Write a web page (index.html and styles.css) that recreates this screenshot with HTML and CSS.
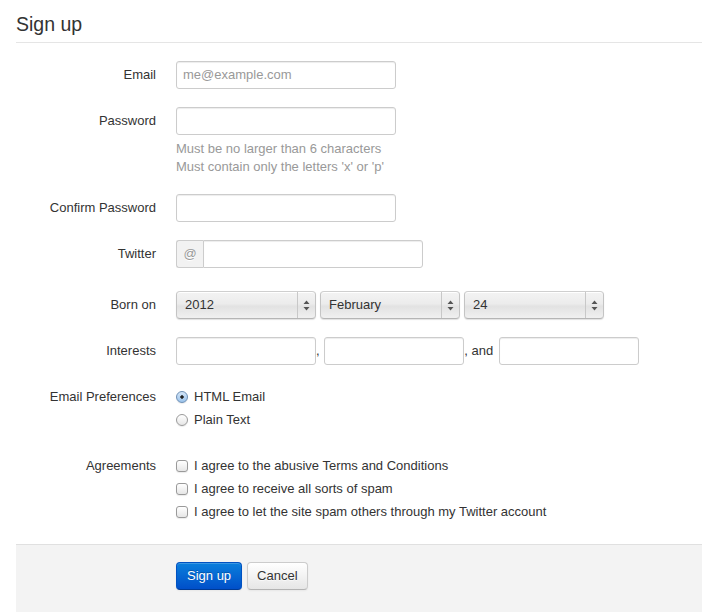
FILE: index.html
```html
<!DOCTYPE html>
<html>
<head>
<meta charset="utf-8">
<title>Sign up</title>
<link rel="stylesheet" href="styles.css">
</head>
<body>
<div class="page">
  <form class="form-horizontal">
    <div class="legend">Sign up</div>

    <div class="control-group">
      <label class="control-label">Email</label>
      <div class="controls">
        <input class="text-input" type="text" placeholder="me@example.com">
      </div>
    </div>

    <div class="control-group">
      <label class="control-label">Password</label>
      <div class="controls">
        <input class="text-input" type="password">
        <p class="help-block">Must be no larger than 6 characters<br>Must contain only the letters 'x' or 'p'</p>
      </div>
    </div>

    <div class="control-group">
      <label class="control-label">Confirm Password</label>
      <div class="controls">
        <input class="text-input" type="password">
      </div>
    </div>

    <div class="control-group">
      <label class="control-label">Twitter</label>
      <div class="controls">
        <div class="input-prepend">
          <span class="add-on">@</span>
          <input class="text-input prepended" type="text">
        </div>
      </div>
    </div>

    <div class="control-group">
      <label class="control-label">Born on</label>
      <div class="controls select-row">
        <div class="select"><span class="select-value">2012</span><span class="select-arrows"><svg width="7" height="11" viewBox="0 0 7 11"><path d="M3.5 0.5 L6.5 4 H0.5 Z M3.5 10.5 L6.5 7 H0.5 Z" fill="#555"/></svg></span></div>
        <div class="select"><span class="select-value">February</span><span class="select-arrows"><svg width="7" height="11" viewBox="0 0 7 11"><path d="M3.5 0.5 L6.5 4 H0.5 Z M3.5 10.5 L6.5 7 H0.5 Z" fill="#555"/></svg></span></div>
        <div class="select select-narrow"><span class="select-value">24</span><span class="select-arrows"><svg width="7" height="11" viewBox="0 0 7 11"><path d="M3.5 0.5 L6.5 4 H0.5 Z M3.5 10.5 L6.5 7 H0.5 Z" fill="#555"/></svg></span></div>
      </div>
    </div>

    <div class="control-group">
      <label class="control-label">Interests</label>
      <div class="controls interests">
        <input class="text-input small" type="text"><span class="sep sep-comma">, </span><input class="text-input small" type="text"><span class="sep sep-and">, and </span><input class="text-input small" type="text">
      </div>
    </div>

    <div class="control-group">
      <label class="control-label">Email Preferences</label>
      <div class="controls choice-list">
        <label class="choice"><input class="radio" type="radio" name="pref" checked><span>HTML Email</span></label>
        <label class="choice"><input class="radio" type="radio" name="pref"><span>Plain Text</span></label>
      </div>
    </div>

    <div class="control-group">
      <label class="control-label">Agreements</label>
      <div class="controls choice-list">
        <label class="choice"><input class="checkbox" type="checkbox"><span>I agree to the abusive Terms and Conditions</span></label>
        <label class="choice"><input class="checkbox" type="checkbox"><span>I agree to receive all sorts of spam</span></label>
        <label class="choice"><input class="checkbox" type="checkbox"><span>I agree to let the site spam others through my Twitter account</span></label>
      </div>
    </div>

    <div class="form-actions">
      <button type="button" class="btn btn-primary">Sign up</button>
      <button type="button" class="btn btn-cancel">Cancel</button>
    </div>
  </form>
</div>
</body>
</html>
```

FILE: styles.css
```css
* {
  box-sizing: content-box;
}

html, body {
  margin: 0;
  padding: 0;
  background: #ffffff;
}

body {
  font-family: "Liberation Sans", Arial, Helvetica, sans-serif;
  font-size: 13px;
  line-height: 18px;
  color: #333333;
}

.page {
  padding: 6px 0 0 16px;
  width: 686px;
}

.legend {
  font-size: 19.5px;
  line-height: 36px;
  color: #333333;
  border-bottom: 1px solid #e5e5e5;
  margin-bottom: 18px;
}

.control-group {
  display: flex;
  align-items: flex-start;
  margin-bottom: 18px;
}

.control-label {
  width: 140px;
  flex-shrink: 0;
  padding-top: 5px;
  text-align: right;
  line-height: 18px;
}

.controls {
  margin-left: 20px;
}

.text-input {
  display: block;
  width: 206px;
  height: 18px;
  padding: 4px 6px;
  margin: 0;
  border: 1px solid #cccccc;
  border-radius: 3px;
  box-shadow: inset 0 1px 1px rgba(0, 0, 0, 0.075);
  font-family: inherit;
  font-size: 13px;
  line-height: 18px;
  color: #555555;
  background: #ffffff;
  outline: none;
}

.text-input::placeholder {
  color: #999999;
}

.help-block {
  margin: 5px 0 0;
  color: #999999;
  line-height: 18px;
}

.input-prepend {
  display: flex;
  margin-bottom: 5px;
}

.add-on {
  display: block;
  min-width: 16px;
  height: 18px;
  padding: 4px 5px;
  line-height: 18px;
  text-align: center;
  color: #999999;
  text-shadow: 0 1px 0 #ffffff;
  background: #f2f2f2;
  border: 1px solid #cccccc;
  border-right: 0;
  border-radius: 3px 0 0 3px;
}

.text-input.prepended {
  border-radius: 0 3px 3px 0;
}

.select-row {
  display: flex;
  gap: 4px;
}

.select {
  display: flex;
  width: 138px;
  height: 26px;
  border: 1px solid #c4c4c4;
  border-top-color: #cfcfcf;
  border-bottom-color: #b5b5b5;
  border-radius: 4px;
  background: linear-gradient(#f3f3f3 0%, #ececec 45%, #e2e2e2 55%, #f0f0f0 100%);
  box-shadow: inset 0 1px 0 #ffffff, 0 1px 1px rgba(0, 0, 0, 0.12);
}

.select-value {
  flex: 1;
  padding-left: 8px;
  line-height: 26px;
  color: #333333;
}

.select-arrows {
  width: 17px;
  border-left: 1px solid #c8c8c8;
  display: flex;
  align-items: center;
  justify-content: center;
}

.interests {
  display: flex;
  align-items: center;
}

.text-input.small {
  width: 126px;
}

.sep {
  white-space: pre;
}

.sep-comma {
  margin-right: 1px;
}

.sep-and {
  margin-right: 2px;
}

.choice-list {
  padding-top: 5px;
}

.choice {
  display: flex;
  align-items: center;
  line-height: 18px;
  margin-bottom: 5px;
}

.radio,
.checkbox {
  -webkit-appearance: none;
  appearance: none;
  margin: 0 6px 0 0;
  width: 10px;
  height: 10px;
  border: 1px solid #9a9a9a;
  background: linear-gradient(#ffffff, #e6e6e6);
  box-shadow: 0 1px 1px rgba(0, 0, 0, 0.08);
  flex-shrink: 0;
}

.radio {
  border-radius: 50%;
}

.radio:checked {
  background: radial-gradient(circle, #222222 0, #222222 1.4px, transparent 2px), linear-gradient(#d5e6f7, #9cc4ec);
  border-color: #6d8fb5;
}

.checkbox {
  border-radius: 3px;
}

.form-actions {
  margin-top: 18px;
  padding: 17px 20px 40px 160px;
  background: #f3f3f3;
  border-top: 1px solid #e0e0e0;
  display: flex;
  gap: 5px;
}

.btn {
  display: inline-block;
  margin: 0;
  padding: 4px 10px;
  font-family: inherit;
  font-size: 13px;
  line-height: 18px;
  color: #333333;
  text-shadow: 0 1px 1px rgba(255, 255, 255, 0.75);
  background: linear-gradient(#ffffff, #e6e6e6);
  border: 1px solid #cccccc;
  border-bottom-color: #b3b3b3;
  border-radius: 4px;
  box-shadow: inset 0 1px 0 rgba(255, 255, 255, 0.2), 0 1px 2px rgba(0, 0, 0, 0.05);
  cursor: pointer;
}

.btn-cancel {
  padding: 4px 9px;
}

.btn-primary {
  color: #ffffff;
  text-shadow: 0 -1px 0 rgba(0, 0, 0, 0.25);
  background: linear-gradient(#0a7fdc, #004fc9);
  border-color: #0052c2 #0052c2 #003a94;
}
```
